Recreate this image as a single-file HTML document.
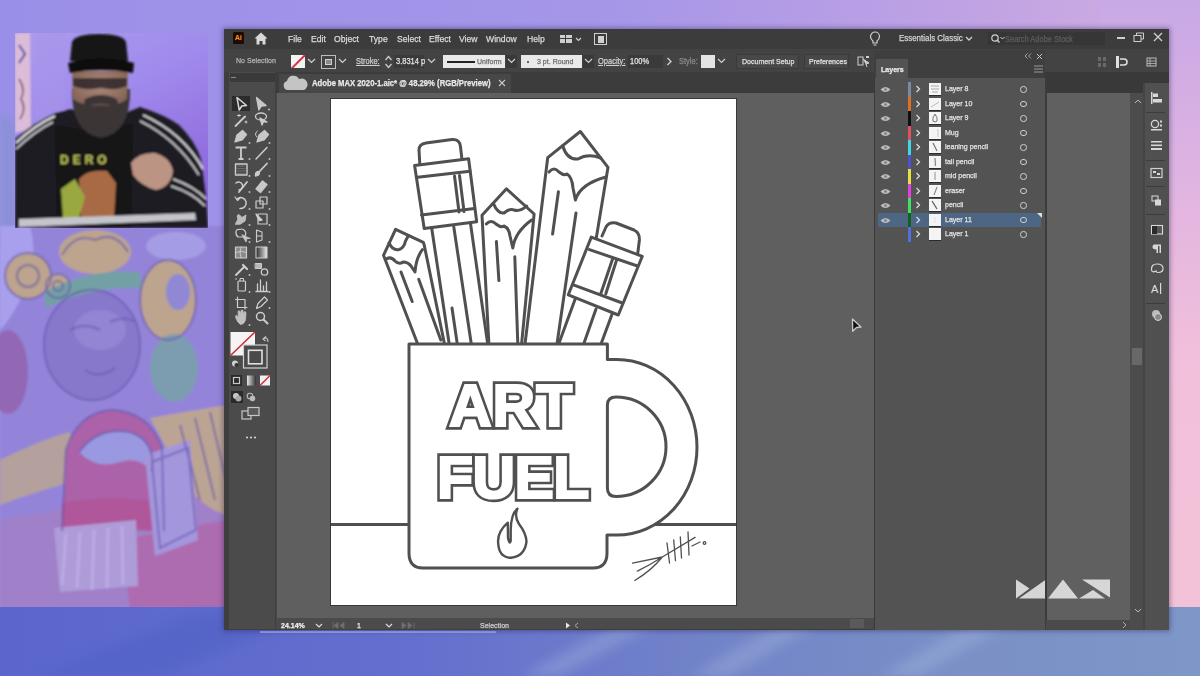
<!DOCTYPE html>
<html><head><meta charset="utf-8">
<style>
*{margin:0;padding:0;box-sizing:border-box}
html,body{width:1200px;height:676px;overflow:hidden;background:#9a8fe8;font-family:"Liberation Sans",sans-serif}
.a{position:absolute}
.t{position:absolute;color:#d8d8d8;font-size:10px;white-space:nowrap;line-height:1;transform:scaleX(.88);transform-origin:0 0;-webkit-text-stroke:.25px currentColor}
</style></head><body>
<!-- background -->
<svg class="a" style="left:0;top:0" width="1200" height="676" viewBox="0 0 1200 676">
<defs>
<linearGradient id="gtop" x1="0" y1="0" x2="1" y2="0">
<stop offset="0" stop-color="#9a8fe8"/><stop offset="0.5" stop-color="#a596e8"/><stop offset="0.8" stop-color="#bfa2e4"/><stop offset="1" stop-color="#d2aee0"/>
</linearGradient>
<linearGradient id="gright" x1="0" y1="0" x2="0" y2="1">
<stop offset="0" stop-color="#c8a8e6"/><stop offset="0.35" stop-color="#e4b6e0"/><stop offset="0.6" stop-color="#f2c0da"/><stop offset="1" stop-color="#f4c2d8"/>
</linearGradient>
<linearGradient id="gbot" x1="0" y1="0" x2="1" y2="0">
<stop offset="0" stop-color="#5a66cc"/><stop offset="0.35" stop-color="#6470ce"/><stop offset="0.6" stop-color="#7284c8"/><stop offset="0.8" stop-color="#7a90c6"/><stop offset="1" stop-color="#7e96c8"/>
</linearGradient>
<filter id="blur6"><feGaussianBlur stdDeviation="6"/></filter>
<filter id="blur3"><feGaussianBlur stdDeviation="3"/></filter>
<filter id="blur1"><feGaussianBlur stdDeviation="1.2"/></filter>
</defs>
<rect width="1200" height="676" fill="url(#gtop)"/>
<rect x="1100" y="0" width="100" height="610" fill="url(#gright)"/>
<path d="M0 110 L15 125 L15 240 L0 250 Z" fill="#8c90d8" filter="url(#blur3)"/>
<!-- left illustration -->
<g filter="url(#blur1)">
<rect x="0" y="226" width="226" height="382" fill="#9384da"/>
<path d="M0 520 L226 480 L226 608 L0 608 Z" fill="#a080c8"/>
<path d="M0 226 H30 Q40 260 20 300 Q10 320 0 330 Z" fill="#a8a0ec"/>
<ellipse cx="8" cy="372" rx="20" ry="42" fill="#9268b4"/>
<!-- face -->
<ellipse cx="92" cy="345" rx="48" ry="55" fill="#8878cc"/>
<ellipse cx="100" cy="330" rx="26" ry="20" fill="#9484d4"/>
<!-- ornaments -->
<circle cx="28" cy="276" r="23" fill="#bca48e"/>
<circle cx="58" cy="286" r="12" fill="#bca48e"/>
<ellipse cx="95" cy="252" rx="36" ry="22" fill="#bca48e"/>
<path d="M44 292 Q90 268 140 272 L142 288 Q92 286 46 308 Z" fill="#72a0a4"/>
<ellipse cx="168" cy="300" rx="28" ry="40" fill="#bca48e"/>
<ellipse cx="178" cy="292" rx="12" ry="18" fill="#9088d4"/>
<ellipse cx="176" cy="246" rx="30" ry="14" fill="#a49ce4"/>
<ellipse cx="174" cy="368" rx="24" ry="34" fill="#7c9cb0"/>
<!-- tan band -->
<path d="M0 460 Q40 440 70 432 L80 480 Q40 490 0 505 Z" fill="#b4a09c"/>
<path d="M150 418 L226 405 L226 515 Q195 505 178 470 Z" fill="#bca494"/>
<!-- pink bottom -->
<path d="M120 540 L226 520 L226 608 L130 608 Z" fill="#ae6cb0"/>
<!-- mask -->
<path d="M62 531 L66 450 Q78 412 112 410 Q150 412 162 448 L164 531 Z" fill="#ac62a8"/>
<path d="M79 452 Q98 426 130 432 Q156 440 152 472 Q140 456 120 462 Q96 470 79 452 Z" fill="#9a98e0"/>
<path d="M62 503 Q112 494 164 503 L164 532 Q112 522 62 532 Z" fill="#b0569a"/>
<!-- fringe -->
<path d="M54 528 L136 520 L138 586 L60 592 Z" fill="#ae9cd8"/>
<path d="M145 455 L190 440 L198 540 L155 556 Z" fill="#a496dc"/>
</g>
<g fill="none" stroke="#c4b4ec" stroke-width="3" opacity="0.6" filter="url(#blur1)">
<path d="M66 534 L62 585 M80 532 L77 588 M94 530 L92 590 M108 528 L107 588 M122 526 L123 584"/>
</g>
<g fill="none" stroke="#6454ac" stroke-width="2" opacity="0.6" filter="url(#blur1)">
<ellipse cx="92" cy="345" rx="48" ry="55"/>
<circle cx="28" cy="276" r="23"/><circle cx="28" cy="276" r="11"/>
<circle cx="58" cy="286" r="12"/><circle cx="58" cy="286" r="5"/>
<path d="M62 255 Q75 232 95 240 Q115 230 128 252"/>
<ellipse cx="168" cy="300" rx="28" ry="40"/>
<path d="M70 330 Q85 322 100 330 M110 322 Q125 315 135 322 M85 370 Q100 380 115 368"/>
<path d="M62 531 L66 450 Q78 412 112 410 Q150 412 162 448 L164 531"/>
<path d="M79 452 Q98 426 130 432 Q156 440 152 472"/>
<path d="M152 462 L188 448 L196 530 L160 548 Z"/>
<path d="M180 425 L200 500 M195 418 L215 500 M210 412 L226 480"/>
</g>
<rect x="0" y="607" width="1200" height="69" fill="url(#gbot)"/>
<g filter="url(#blur6)" opacity="0.55">
<path d="M520 676 L640 612 L680 612 L560 676 Z" fill="#90a2d8"/>
<path d="M690 676 L800 612 L840 612 L730 676 Z" fill="#94a6d6"/>
<path d="M880 676 L990 612 L1030 612 L920 676 Z" fill="#98aad8"/>
<path d="M40 676 L200 612 L320 612 L160 676 Z" fill="#5060c4"/>
</g>
<rect x="260" y="631" width="236" height="2" fill="#9aa4e8"/>
</svg>
<!-- webcam -->
<svg class="a" style="left:15px;top:33px" width="193" height="195" viewBox="0 0 193 195">
<defs>
<linearGradient id="camg" x1="0" y1="0" x2="0.5" y2="1">
<stop offset="0" stop-color="#ac9cee"/><stop offset="0.45" stop-color="#a08aec"/><stop offset="1" stop-color="#8e68dc"/>
</linearGradient>
<radialGradient id="face" cx="0.5" cy="0.4" r="0.6"><stop offset="0" stop-color="#b08c7c"/><stop offset="1" stop-color="#846456"/></radialGradient>
<filter id="cb" x="-5%" y="-5%" width="110%" height="110%"><feGaussianBlur stdDeviation="1.1"/></filter>
</defs>
<rect width="193" height="195" fill="url(#camg)"/>
<g filter="url(#cb)">
<rect x="20" y="0" width="30" height="195" fill="#a894ea" opacity="0.5"/>
<path d="M0 0 H15 L16 96 L0 100 Z" fill="#dcbcd8"/>
<path d="M4 12 L10 21 L4 30" stroke="#3c4ca0" stroke-width="2" fill="none"/>
<path d="M4 46 Q11 56 6 66 Q12 76 5 86" stroke="#6a4a60" stroke-width="1.5" fill="none"/>
<!-- jacket -->
<path d="M0 106 Q18 90 40 80 L56 76 L86 90 L125 74 Q150 82 164 92 Q180 108 186 126 L191 164 L193 195 L0 195 Z" fill="#1c1b20"/>
<path d="M1 110 Q20 92 40 83" stroke="#e6e6ea" stroke-width="2" fill="none"/>
<path d="M1 116 Q20 98 38 89" stroke="#d6d6da" stroke-width="1.6" fill="none"/>
<path d="M128 82 Q168 100 188 136" stroke="#e6e6ea" stroke-width="1.9" fill="none"/>
<path d="M125 88 Q162 106 184 142" stroke="#d6d6da" stroke-width="1.5" fill="none"/>
<path d="M158 146 Q180 154 191 166 M156 153 Q178 160 190 173" stroke="#dedee2" stroke-width="1.7" fill="none"/>
<!-- t-shirt -->
<path d="M40 92 L86 100 L118 90 L116 195 L42 195 Z" fill="#141417"/>
<text x="45" y="131" font-family="Liberation Sans" font-weight="bold" font-size="12" fill="#c6ca5c" letter-spacing="4">DERO</text>
<path d="M64 146 Q72 136 92 138 L101 150 L99 185 L66 185 Z" fill="#a86a44"/>
<path d="M46 156 L60 146 L70 164 L64 185 L48 185 Z" fill="#9aa840"/>
<!-- neck beard -->
<path d="M57 56 Q56 100 86 105 Q116 100 115 56 Z" fill="#3a3436"/>
<!-- face -->
<path d="M57 38 L113 38 L112 66 Q102 74 86 72 Q68 74 58 66 Z" fill="url(#face)"/>
<path d="M58 45 H112 V53 Q102 58 86 55 Q70 58 58 53 Z" fill="#2e2628" opacity="0.85"/>
<path d="M70 66 Q86 58 102 66 L104 74 Q86 68 68 74 Z" fill="#3a3436"/>
<!-- cap -->
<path d="M55 28 L57 9 Q60 1 84 1 Q108 1 111 9 L113 28 Z" fill="#161616"/>
<path d="M53 30 Q86 21 119 30 L118 40 Q86 34 55 40 Z" fill="#0c0c0c"/>
<!-- hand -->
<path d="M116 130 Q124 119 140 120 Q155 124 158 138 Q156 154 141 157 Q126 153 118 142 Z" fill="#bc9484"/>
<!-- desk -->
<path d="M4 186 L180 180 L181 187 L4 194 Z" fill="#c4c4cc"/>
</g>
</svg>
<!-- illustrator window -->
<div class="a" style="left:224px;top:29px;width:945px;height:601px;background:#3e3e3e;box-shadow:0 0 5px 1px rgba(40,30,80,.45)"></div>
<!-- menu bar -->
<div class="a" style="left:224px;top:29px;width:945px;height:20px;background:#3c3c3c"></div>
<div class="a" style="left:233px;top:32px;width:10.5px;height:11.5px;background:#1e0a02;border-radius:1.5px;color:#ff9a1a;font-size:7px;font-weight:bold;line-height:11.5px;text-align:center">Ai</div>
<svg class="a" style="left:254px;top:32px" width="14" height="13" viewBox="0 0 14 13"><path d="M7 0.5 L13.5 6.5 L11.5 6.5 L11.5 12.5 L8.5 12.5 L8.5 9 L5.5 9 L5.5 12.5 L2.5 12.5 L2.5 6.5 L0.5 6.5 Z" fill="#d8d8d8"/></svg>
<div class="t" style="left:288px;top:34px;font-size:9.8px;color:#dcdcdc">File</div>
<div class="t" style="left:311px;top:34px;font-size:9.8px;color:#dcdcdc">Edit</div>
<div class="t" style="left:334px;top:34px;font-size:9.8px;color:#dcdcdc">Object</div>
<div class="t" style="left:369px;top:34px;font-size:9.8px;color:#dcdcdc">Type</div>
<div class="t" style="left:397px;top:34px;font-size:9.8px;color:#dcdcdc">Select</div>
<div class="t" style="left:429px;top:34px;font-size:9.8px;color:#dcdcdc">Effect</div>
<div class="t" style="left:459px;top:34px;font-size:9.8px;color:#dcdcdc">View</div>
<div class="t" style="left:486px;top:34px;font-size:9.8px;color:#dcdcdc">Window</div>
<div class="t" style="left:527px;top:34px;font-size:9.8px;color:#dcdcdc">Help</div>
<svg class="a" style="left:559px;top:33px" width="60" height="12" viewBox="0 0 60 12">
<rect x="1" y="2" width="5" height="3" fill="#cfcfcf"/><rect x="7" y="2" width="6" height="3" fill="#cfcfcf"/><rect x="1" y="6" width="5" height="4" fill="#cfcfcf"/><rect x="7" y="6" width="6" height="4" fill="#cfcfcf"/>
<path d="M17 5 L19.5 7.5 L22 5" stroke="#cfcfcf" stroke-width="1.2" fill="none"/>
<rect x="35.5" y="0.5" width="12" height="11" fill="none" stroke="#cfcfcf"/><rect x="39" y="3" width="6" height="7" fill="#cfcfcf"/>
</svg>
<svg class="a" style="left:869px;top:31px" width="12" height="16" viewBox="0 0 12 16"><path d="M6 1 A4.5 4.5 0 0 1 10.5 5.5 Q10.5 8 8 10 L8 12 L4 12 L4 10 Q1.5 8 1.5 5.5 A4.5 4.5 0 0 1 6 1 Z" fill="none" stroke="#d0d0d0" stroke-width="1.2"/><path d="M4.5 14 L7.5 14" stroke="#d0d0d0"/></svg>
<div class="t" style="left:899px;top:34px;font-size:9px;color:#d4d4d4">Essentials Classic</div>
<svg class="a" style="left:965px;top:36px" width="8" height="6"><path d="M1 1 L4 4 L7 1" stroke="#d0d0d0" stroke-width="1.3" fill="none"/></svg>
<div class="a" style="left:988px;top:32px;width:117px;height:13px;background:#363636"></div>
<svg class="a" style="left:990px;top:33px" width="16" height="11"><circle cx="5" cy="5" r="3.2" stroke="#d0d0d0" stroke-width="1.2" fill="none"/><path d="M7.3 7.3 L9.5 9.5" stroke="#d0d0d0" stroke-width="1.3"/><path d="M10.5 4 L12.5 6 L14.5 4" stroke="#d0d0d0" fill="none"/></svg>
<div class="t" style="left:1005px;top:35px;font-size:8.5px;color:#5e5e5e">Search Adobe Stock</div>
<div class="a" style="left:1117px;top:37px;width:8px;height:2px;background:#cfcfcf"></div>
<svg class="a" style="left:1133px;top:32px" width="12" height="11"><rect x="1" y="3.5" width="7" height="6" fill="none" stroke="#cfcfcf"/><path d="M3.5 3.5 L3.5 1 L10.5 1 L10.5 7 L8 7" fill="none" stroke="#cfcfcf"/></svg>
<svg class="a" style="left:1153px;top:32px" width="10" height="10"><path d="M1 1 L9 9 M9 1 L1 9" stroke="#cfcfcf" stroke-width="1.3"/></svg>

<!-- control bar -->
<div class="a" style="left:224px;top:49px;width:945px;height:23px;background:#434343"></div>
<div class="t" style="left:236px;top:57px;font-size:8px;color:#b4b4b4">No Selection</div>
<div class="a" style="left:291px;top:55px;width:14px;height:13px;background:#f4f4f4;overflow:hidden"><div style="position:absolute;left:-3px;top:5.5px;width:20px;height:1.5px;background:#d83040;transform:rotate(-45deg)"></div></div>
<svg class="a" style="left:307px;top:58px" width="9" height="6"><path d="M1 1 L4.5 4.5 L8 1" stroke="#cfcfcf" stroke-width="1.2" fill="none"/></svg>
<div class="a" style="left:321px;top:55px;width:15px;height:14px;border:1.5px solid #bdbdbd"></div>
<div class="a" style="left:325px;top:59px;width:7px;height:6px;background:#8a8a8a;border:1px solid #cfcfcf"></div>
<svg class="a" style="left:338px;top:58px" width="9" height="6"><path d="M1 1 L4.5 4.5 L8 1" stroke="#cfcfcf" stroke-width="1.2" fill="none"/></svg>
<div class="t" style="left:356px;top:57px;font-size:8.5px;color:#d0d0d0;text-decoration:underline">Stroke:</div>
<svg class="a" style="left:384px;top:54px" width="9" height="16"><path d="M1.5 6 L4.5 2.5 L7.5 6 M1.5 10 L4.5 13.5 L7.5 10" stroke="#d0d0d0" stroke-width="1.2" fill="none"/></svg>
<div class="a" style="left:394px;top:55px;width:30px;height:13px;background:#3a3a3a"></div>
<div class="t" style="left:396px;top:57px;font-size:8.5px;color:#e4e4e4">3.8314 p</div>
<svg class="a" style="left:427px;top:58px" width="9" height="6"><path d="M1 1 L4.5 4.5 L8 1" stroke="#cfcfcf" stroke-width="1.2" fill="none"/></svg>
<div class="a" style="left:443px;top:55px;width:62px;height:13px;background:#e9e9e9"></div>
<div class="a" style="left:447px;top:61px;width:28px;height:1.6px;background:#222"></div>
<div class="t" style="left:477px;top:58px;font-size:8px;color:#6a6a6a">Uniform</div>
<div class="a" style="left:506px;top:55px;width:11px;height:13px;background:#393939"></div>
<svg class="a" style="left:507px;top:58px" width="9" height="6"><path d="M1 1 L4.5 4.5 L8 1" stroke="#cfcfcf" stroke-width="1.2" fill="none"/></svg>
<div class="a" style="left:521px;top:55px;width:61px;height:13px;background:#e9e9e9"></div>
<div class="a" style="left:527px;top:60.5px;width:2px;height:2px;background:#333;border-radius:1px"></div>
<div class="t" style="left:537px;top:58px;font-size:8px;color:#6a6a6a">3 pt. Round</div>
<div class="a" style="left:583px;top:55px;width:11px;height:13px;background:#393939"></div>
<svg class="a" style="left:584px;top:58px" width="9" height="6"><path d="M1 1 L4.5 4.5 L8 1" stroke="#cfcfcf" stroke-width="1.2" fill="none"/></svg>
<div class="t" style="left:598px;top:57px;font-size:8.5px;color:#cfcfcf;text-decoration:underline">Opacity:</div>
<div class="a" style="left:628px;top:55px;width:35px;height:13px;background:#3a3a3a"></div>
<div class="t" style="left:630px;top:57px;font-size:8.5px;color:#e4e4e4">100%</div>
<svg class="a" style="left:666px;top:57px" width="7" height="9"><path d="M1.5 1 L5 4.5 L1.5 8" stroke="#d0d0d0" stroke-width="1.3" fill="none"/></svg>
<div class="t" style="left:679px;top:57px;font-size:8.5px;color:#8c8c8c">Style:</div>
<div class="a" style="left:701px;top:55px;width:14px;height:13px;background:#e4e4e4"></div>
<svg class="a" style="left:717px;top:58px" width="9" height="6"><path d="M1 1 L4.5 4.5 L8 1" stroke="#cfcfcf" stroke-width="1.2" fill="none"/></svg>
<div class="a" style="left:736px;top:54px;width:63px;height:15px;background:#484848;border:1px solid #3a3a3a"></div>
<div class="t" style="left:742px;top:58px;font-size:8px;color:#e2e2e2">Document Setup</div>
<div class="a" style="left:804px;top:54px;width:45px;height:15px;background:#484848;border:1px solid #3a3a3a"></div>
<div class="t" style="left:809px;top:58px;font-size:8px;color:#e2e2e2">Preferences</div>
<svg class="a" style="left:857px;top:55px" width="14" height="13"><rect x="1" y="2" width="5" height="8" fill="none" stroke="#cfcfcf"/><path d="M6 4 L12 8 L9 9 L10 12" stroke="#cfcfcf" fill="#cfcfcf"/><rect x="9" y="1" width="3" height="2" fill="#cfcfcf"/></svg>
<!-- right side control icons -->
<svg class="a" style="left:1098px;top:55px" width="60" height="14">
<rect x="0" y="2" width="3" height="4" fill="#6a6a6a"/><rect x="5" y="2" width="3" height="4" fill="#6a6a6a"/><rect x="0" y="8" width="3" height="4" fill="#6a6a6a"/><rect x="5" y="8" width="3" height="4" fill="#6a6a6a"/>
<rect x="18" y="1" width="3" height="12" fill="#e0e0e0"/><path d="M22 4 L26 4 A3 3 0 0 1 26 10 L22 10" stroke="#e0e0e0" stroke-width="1.5" fill="none"/>
<rect x="49" y="3" width="9" height="8" fill="none" stroke="#bdbdbd"/><path d="M49 6 L58 6 M49 8.5 L58 8.5 M52 3 L52 11" stroke="#bdbdbd" stroke-width=".8"/>
</svg>

<!-- tab bar strip -->
<div class="a" style="left:276px;top:72px;width:599px;height:21px;background:#3c3c3c"></div>
<div class="a" style="left:279px;top:74px;width:232px;height:19px;background:#474747"></div>
<svg class="a" style="left:283px;top:74px" width="25" height="17" viewBox="0 0 25 17"><path d="M5 16 A4.6 4.6 0 0 1 4 7 A6.5 6.5 0 0 1 16 5 A5.5 5.5 0 0 1 21 16 Z" fill="#c4c4c4"/></svg>
<div class="t" style="left:312px;top:79px;font-size:8.5px;font-weight:bold;color:#e8e8e8;transform:scaleX(.905)">Adobe MAX 2020-1.aic* @ 48.29% (RGB/Preview)</div>
<svg class="a" style="left:498px;top:79px" width="8" height="8"><path d="M1 1 L7 7 M7 1 L1 7" stroke="#c8c8c8" stroke-width="1.1"/></svg>

<!-- toolbar -->
<div class="a" style="left:229px;top:72px;width:47px;height:557px;background:#4b4b4b"></div>
<div class="a" style="left:230px;top:73px;width:46px;height:9px;background:#3a3a3a"></div>
<div class="a" style="left:231px;top:76.5px;width:5px;height:1.5px;background:#8a8a8a"></div>
<div class="a" style="left:275px;top:72px;width:1px;height:557px;background:#3e3e3e"></div>
<div class="a" style="left:232px;top:96px;width:18px;height:15px;background:#2c2c2c"></div>

<!-- canvas -->
<div class="a" style="left:276px;top:93px;width:598px;height:525px;background:#5f5f5f"></div>
<div class="a" style="left:276px;top:93px;width:1px;height:525px;background:#4a4a4a"></div>
<!-- h scrollbar / status -->
<div class="a" style="left:276px;top:618px;width:598px;height:11px;background:#4b4b4b"></div>
<div class="t" style="left:281px;top:622px;font-size:8px;font-weight:bold;color:#f0f0f0">24.14%</div>
<svg class="a" style="left:315px;top:623px" width="8" height="6"><path d="M1 1 L4 4 L7 1" stroke="#dcdcdc" stroke-width="1.2" fill="none"/></svg>
<svg class="a" style="left:332px;top:622px" width="14" height="7"><path d="M1 0.5 V6.5 M6 0.5 L2 3.5 L6 6.5 Z M12 0.5 L8 3.5 L12 6.5 Z" stroke="#6e6e6e" fill="#6e6e6e" stroke-width=".8"/></svg>
<div class="t" style="left:357px;top:622px;font-size:8px;color:#f0f0f0">1</div>
<svg class="a" style="left:385px;top:623px" width="8" height="6"><path d="M1 1 L4 4 L7 1" stroke="#dcdcdc" stroke-width="1.2" fill="none"/></svg>
<svg class="a" style="left:401px;top:622px" width="14" height="7"><path d="M1 0.5 L5 3.5 L1 6.5 Z M7 0.5 L11 3.5 L7 6.5 Z M13 0.5 V6.5" stroke="#6e6e6e" fill="#6e6e6e" stroke-width=".8"/></svg>
<div class="t" style="left:480px;top:622px;font-size:8px;color:#cfcfcf">Selection</div>
<svg class="a" style="left:565px;top:622px" width="16" height="7"><path d="M1 0.5 L5 3.5 L1 6.5 Z" fill="#e8e8e8"/><path d="M13 1 L10 3.5 L13 6" stroke="#aaa" fill="none"/></svg>
<div class="a" style="left:850px;top:619px;width:14px;height:9px;background:#5a5a5a"></div>

<!-- layers panel -->
<div class="a" style="left:874px;top:51px;width:171px;height:579px;background:#535353;border-left:1px solid #3a3a3a"></div>
<div class="a" style="left:874px;top:50px;width:171px;height:28px;background:#3f3f3f"></div>
<div class="a" style="left:876px;top:59px;width:32px;height:19px;background:#535353"></div>
<div class="t" style="left:881px;top:65.5px;font-size:8px;font-weight:bold;color:#ececec">Layers</div>
<svg class="a" style="left:1024px;top:53px" width="8" height="6"><path d="M3.5 0.5 L1 3 L3.5 5.5 M7 0.5 L4.5 3 L7 5.5" stroke="#aaa" fill="none" stroke-width=".9"/></svg>
<svg class="a" style="left:1036px;top:53px" width="7" height="7"><path d="M1 1 L6 6 M6 1 L1 6" stroke="#c8c8c8" stroke-width="1"/></svg>
<svg class="a" style="left:1034px;top:65px" width="9" height="8"><path d="M0 1 H9 M0 4 H9 M0 7 H9" stroke="#9a9a9a" stroke-width="1.2"/></svg>
<div class="a" style="left:878px;top:213px;width:163px;height:14px;background:#4d6684"></div>
<div class="a" style="left:1037px;top:213px;width:0;height:0;border-top:5px solid #e0e0e0;border-left:5px solid transparent"></div>
<svg class="a" style="left:880px;top:86.0px" width="11" height="7"><path d="M0.5 3.5 Q5.5 -1.5 10.5 3.5 Q5.5 8.5 0.5 3.5 Z" fill="#bdbdbd"/><circle cx="5.5" cy="3.5" r="1.3" fill="#7a7a7a"/></svg><div class="a" style="left:908px;top:82.0px;width:3.2px;height:14.5px;background:#7a8aa0"></div><svg class="a" style="left:915px;top:85.0px" width="6" height="8"><path d="M1.5 1 L4.5 4 L1.5 7" stroke="#d8d8d8" stroke-width="1.3" fill="none"/></svg><div class="a" style="left:929px;top:83.0px;width:12px;height:12px;background:#f4f4f4;box-shadow:0 1px 0 #2a2a2a"></div><svg class="a" style="left:929px;top:83.0px" width="12" height="12"><path d="M2 3 H10 M2 6 H10 M3 9 H9" stroke="#999" stroke-width=".8"/></svg><div class="t" style="left:944.5px;top:85.3px;font-size:8px;color:#e6e6e6">Layer 8</div><div class="a" style="left:1020px;top:86.0px;width:6.5px;height:6.5px;border:1.4px solid #cfcfcf;border-radius:50%"></div>
<svg class="a" style="left:880px;top:100.5px" width="11" height="7"><path d="M0.5 3.5 Q5.5 -1.5 10.5 3.5 Q5.5 8.5 0.5 3.5 Z" fill="#bdbdbd"/><circle cx="5.5" cy="3.5" r="1.3" fill="#7a7a7a"/></svg><div class="a" style="left:908px;top:96.5px;width:3.2px;height:14.5px;background:#e07020"></div><svg class="a" style="left:915px;top:99.5px" width="6" height="8"><path d="M1.5 1 L4.5 4 L1.5 7" stroke="#d8d8d8" stroke-width="1.3" fill="none"/></svg><div class="a" style="left:929px;top:97.5px;width:12px;height:12px;background:#f4f4f4;box-shadow:0 1px 0 #2a2a2a"></div><svg class="a" style="left:929px;top:97.5px" width="12" height="12"><path d="M2 9 L10 4" stroke="#aaa" stroke-width=".8"/></svg><div class="t" style="left:944.5px;top:99.8px;font-size:8px;color:#e6e6e6">Layer 10</div><div class="a" style="left:1020px;top:100.5px;width:6.5px;height:6.5px;border:1.4px solid #cfcfcf;border-radius:50%"></div>
<svg class="a" style="left:880px;top:115.0px" width="11" height="7"><path d="M0.5 3.5 Q5.5 -1.5 10.5 3.5 Q5.5 8.5 0.5 3.5 Z" fill="#bdbdbd"/><circle cx="5.5" cy="3.5" r="1.3" fill="#7a7a7a"/></svg><div class="a" style="left:908px;top:111.0px;width:3.2px;height:14.5px;background:#101010"></div><svg class="a" style="left:915px;top:114.0px" width="6" height="8"><path d="M1.5 1 L4.5 4 L1.5 7" stroke="#d8d8d8" stroke-width="1.3" fill="none"/></svg><div class="a" style="left:929px;top:112.0px;width:12px;height:12px;background:#f4f4f4;box-shadow:0 1px 0 #2a2a2a"></div><svg class="a" style="left:929px;top:112.0px" width="12" height="12"><path d="M6 2 Q3 6 4 9 Q6 11 8 9 Q9 6 6 2" stroke="#666" stroke-width=".9" fill="none"/></svg><div class="t" style="left:944.5px;top:114.3px;font-size:8px;color:#e6e6e6">Layer 9</div><div class="a" style="left:1020px;top:115.0px;width:6.5px;height:6.5px;border:1.4px solid #cfcfcf;border-radius:50%"></div>
<svg class="a" style="left:880px;top:129.5px" width="11" height="7"><path d="M0.5 3.5 Q5.5 -1.5 10.5 3.5 Q5.5 8.5 0.5 3.5 Z" fill="#bdbdbd"/><circle cx="5.5" cy="3.5" r="1.3" fill="#7a7a7a"/></svg><div class="a" style="left:908px;top:125.5px;width:3.2px;height:14.5px;background:#e05060"></div><svg class="a" style="left:915px;top:128.5px" width="6" height="8"><path d="M1.5 1 L4.5 4 L1.5 7" stroke="#d8d8d8" stroke-width="1.3" fill="none"/></svg><div class="a" style="left:929px;top:126.5px;width:12px;height:12px;background:#f4f4f4;box-shadow:0 1px 0 #2a2a2a"></div><svg class="a" style="left:929px;top:126.5px" width="12" height="12"><path d="M9 2 V10" stroke="#bbb" stroke-width=".8"/></svg><div class="t" style="left:944.5px;top:128.8px;font-size:8px;color:#e6e6e6">Mug</div><div class="a" style="left:1020px;top:129.5px;width:6.5px;height:6.5px;border:1.4px solid #cfcfcf;border-radius:50%"></div>
<svg class="a" style="left:880px;top:144.0px" width="11" height="7"><path d="M0.5 3.5 Q5.5 -1.5 10.5 3.5 Q5.5 8.5 0.5 3.5 Z" fill="#bdbdbd"/><circle cx="5.5" cy="3.5" r="1.3" fill="#7a7a7a"/></svg><div class="a" style="left:908px;top:140.0px;width:3.2px;height:14.5px;background:#40d8e8"></div><svg class="a" style="left:915px;top:143.0px" width="6" height="8"><path d="M1.5 1 L4.5 4 L1.5 7" stroke="#d8d8d8" stroke-width="1.3" fill="none"/></svg><div class="a" style="left:929px;top:141.0px;width:12px;height:12px;background:#f4f4f4;box-shadow:0 1px 0 #2a2a2a"></div><svg class="a" style="left:929px;top:141.0px" width="12" height="12"><path d="M4 2 L8 10" stroke="#777" stroke-width="1.2"/></svg><div class="t" style="left:944.5px;top:143.3px;font-size:8px;color:#e6e6e6">leaning pencil</div><div class="a" style="left:1020px;top:144.0px;width:6.5px;height:6.5px;border:1.4px solid #cfcfcf;border-radius:50%"></div>
<svg class="a" style="left:880px;top:158.5px" width="11" height="7"><path d="M0.5 3.5 Q5.5 -1.5 10.5 3.5 Q5.5 8.5 0.5 3.5 Z" fill="#bdbdbd"/><circle cx="5.5" cy="3.5" r="1.3" fill="#7a7a7a"/></svg><div class="a" style="left:908px;top:154.5px;width:3.2px;height:14.5px;background:#5050d0"></div><svg class="a" style="left:915px;top:157.5px" width="6" height="8"><path d="M1.5 1 L4.5 4 L1.5 7" stroke="#d8d8d8" stroke-width="1.3" fill="none"/></svg><div class="a" style="left:929px;top:155.5px;width:12px;height:12px;background:#f4f4f4;box-shadow:0 1px 0 #2a2a2a"></div><svg class="a" style="left:929px;top:155.5px" width="12" height="12"><path d="M6 2 L6.5 10" stroke="#888" stroke-width="1.2"/></svg><div class="t" style="left:944.5px;top:157.8px;font-size:8px;color:#e6e6e6">tall pencil</div><div class="a" style="left:1020px;top:158.5px;width:6.5px;height:6.5px;border:1.4px solid #cfcfcf;border-radius:50%"></div>
<svg class="a" style="left:880px;top:173.0px" width="11" height="7"><path d="M0.5 3.5 Q5.5 -1.5 10.5 3.5 Q5.5 8.5 0.5 3.5 Z" fill="#bdbdbd"/><circle cx="5.5" cy="3.5" r="1.3" fill="#7a7a7a"/></svg><div class="a" style="left:908px;top:169.0px;width:3.2px;height:14.5px;background:#e8e040"></div><svg class="a" style="left:915px;top:172.0px" width="6" height="8"><path d="M1.5 1 L4.5 4 L1.5 7" stroke="#d8d8d8" stroke-width="1.3" fill="none"/></svg><div class="a" style="left:929px;top:170.0px;width:12px;height:12px;background:#f4f4f4;box-shadow:0 1px 0 #2a2a2a"></div><svg class="a" style="left:929px;top:170.0px" width="12" height="12"><path d="M6 2 L6 10" stroke="#999" stroke-width="1.1"/></svg><div class="t" style="left:944.5px;top:172.3px;font-size:8px;color:#e6e6e6">mid pencil</div><div class="a" style="left:1020px;top:173.0px;width:6.5px;height:6.5px;border:1.4px solid #cfcfcf;border-radius:50%"></div>
<svg class="a" style="left:880px;top:187.5px" width="11" height="7"><path d="M0.5 3.5 Q5.5 -1.5 10.5 3.5 Q5.5 8.5 0.5 3.5 Z" fill="#bdbdbd"/><circle cx="5.5" cy="3.5" r="1.3" fill="#7a7a7a"/></svg><div class="a" style="left:908px;top:183.5px;width:3.2px;height:14.5px;background:#e040e0"></div><svg class="a" style="left:915px;top:186.5px" width="6" height="8"><path d="M1.5 1 L4.5 4 L1.5 7" stroke="#d8d8d8" stroke-width="1.3" fill="none"/></svg><div class="a" style="left:929px;top:184.5px;width:12px;height:12px;background:#f4f4f4;box-shadow:0 1px 0 #2a2a2a"></div><svg class="a" style="left:929px;top:184.5px" width="12" height="12"><path d="M8 2 L5 10" stroke="#888" stroke-width="1.2"/></svg><div class="t" style="left:944.5px;top:186.8px;font-size:8px;color:#e6e6e6">eraser</div><div class="a" style="left:1020px;top:187.5px;width:6.5px;height:6.5px;border:1.4px solid #cfcfcf;border-radius:50%"></div>
<svg class="a" style="left:880px;top:202.0px" width="11" height="7"><path d="M0.5 3.5 Q5.5 -1.5 10.5 3.5 Q5.5 8.5 0.5 3.5 Z" fill="#bdbdbd"/><circle cx="5.5" cy="3.5" r="1.3" fill="#7a7a7a"/></svg><div class="a" style="left:908px;top:198.0px;width:3.2px;height:14.5px;background:#40e060"></div><svg class="a" style="left:915px;top:201.0px" width="6" height="8"><path d="M1.5 1 L4.5 4 L1.5 7" stroke="#d8d8d8" stroke-width="1.3" fill="none"/></svg><div class="a" style="left:929px;top:199.0px;width:12px;height:12px;background:#f4f4f4;box-shadow:0 1px 0 #2a2a2a"></div><svg class="a" style="left:929px;top:199.0px" width="12" height="12"><path d="M3 2 L8 10" stroke="#666" stroke-width="1.4"/></svg><div class="t" style="left:944.5px;top:201.3px;font-size:8px;color:#e6e6e6">pencil</div><div class="a" style="left:1020px;top:202.0px;width:6.5px;height:6.5px;border:1.4px solid #cfcfcf;border-radius:50%"></div>
<svg class="a" style="left:880px;top:216.5px" width="11" height="7"><path d="M0.5 3.5 Q5.5 -1.5 10.5 3.5 Q5.5 8.5 0.5 3.5 Z" fill="#bdbdbd"/><circle cx="5.5" cy="3.5" r="1.3" fill="#7a7a7a"/></svg><div class="a" style="left:908px;top:212.5px;width:3.2px;height:14.5px;background:#106020"></div><svg class="a" style="left:915px;top:215.5px" width="6" height="8"><path d="M1.5 1 L4.5 4 L1.5 7" stroke="#d8d8d8" stroke-width="1.3" fill="none"/></svg><div class="a" style="left:929px;top:213.5px;width:12px;height:12px;background:#f4f4f4;box-shadow:0 1px 0 #2a2a2a"></div><svg class="a" style="left:929px;top:213.5px" width="12" height="12"><path d="M6 3 V9" stroke="#ddd" stroke-width=".8"/></svg><div class="t" style="left:944.5px;top:215.8px;font-size:8px;color:#e6e6e6">Layer 11</div><div class="a" style="left:1020px;top:216.5px;width:6.5px;height:6.5px;border:1.4px solid #cfcfcf;border-radius:50%"></div>
<div class="a" style="left:908px;top:227.0px;width:3.2px;height:14.5px;background:#5070e0"></div><svg class="a" style="left:915px;top:230.0px" width="6" height="8"><path d="M1.5 1 L4.5 4 L1.5 7" stroke="#d8d8d8" stroke-width="1.3" fill="none"/></svg><div class="a" style="left:929px;top:228.0px;width:12px;height:12px;background:#f4f4f4;box-shadow:0 1px 0 #2a2a2a"></div><svg class="a" style="left:929px;top:228.0px" width="12" height="12"></svg><div class="t" style="left:944.5px;top:230.3px;font-size:8px;color:#e6e6e6">Layer 1</div><div class="a" style="left:1020px;top:231.0px;width:6.5px;height:6.5px;border:1.4px solid #cfcfcf;border-radius:50%"></div>


<!-- right area -->
<div class="a" style="left:1045px;top:72px;width:124px;height:21px;background:#393939"></div>
<div class="a" style="left:1046px;top:93px;width:84px;height:537px;background:#606060"></div>
<div class="a" style="left:1130px;top:93px;width:13px;height:537px;background:#4c4c4c"></div>
<svg class="a" style="left:1134px;top:98px" width="8" height="6"><path d="M1 5 L4 2 L7 5" stroke="#bbb" fill="none"/></svg>
<div class="a" style="left:1132px;top:348px;width:10px;height:17px;background:#686868"></div>
<svg class="a" style="left:1134px;top:608px" width="8" height="6"><path d="M1 1 L4 4 L7 1" stroke="#bbb" fill="none"/></svg>
<div class="a" style="left:1143px;top:83px;width:26px;height:547px;background:#505050"></div><div class="a" style="left:1143px;top:83px;width:2px;height:547px;background:#454545"></div>
<svg class="a" style="left:1144px;top:83px" width="25" height="250" viewBox="1144 83 25 250">
<g fill="#d8d8d8" stroke="none">
<rect x="1151" y="92" width="1.5" height="12"/><rect x="1153" y="93.5" width="5" height="3.5"/><rect x="1153" y="99" width="9" height="3.5"/>
<circle cx="1155" cy="124" r="3.6" fill="none" stroke="#d8d8d8" stroke-width="1.3"/><rect x="1160" y="120.5" width="2" height="2"/><rect x="1160" y="124.5" width="2" height="2"/><rect x="1151" y="129" width="11" height="1.5"/>
<rect x="1151" y="141" width="11" height="1.5"/><rect x="1151" y="144.5" width="11" height="1.6"/><rect x="1151" y="148" width="11" height="2"/>
<rect x="1151" y="168.5" width="11" height="9" fill="none" stroke="#d0d0d0" stroke-width="1.2"/><rect x="1153" y="171" width="3" height="2"/><rect x="1157" y="173" width="3" height="2"/>
<rect x="1152" y="196" width="6" height="5" fill="none" stroke="#d0d0d0" stroke-width="1.1"/><rect x="1155" y="199.5" width="6" height="6"/>
<rect x="1151.5" y="225.5" width="11" height="8.5" fill="#555" stroke="#d8d8d8" stroke-width="1.1"/><rect x="1152" y="226" width="5" height="8" fill="#2a2a2a"/>
<path d="M1154 244.5 H1161 V253 H1159.5 V246 H1158 V253 H1156.5 V249.5 Q1152.5 249.5 1152.5 247 Q1152.5 244.5 1154 244.5 Z"/>
<path d="M1151.5 270 Q1151 264 1157 264 Q1163 264 1163 268.5 Q1163 272.5 1158 272.5 Q1156 272.5 1156 271 Q1152 273 1151.5 270 Z" fill="none" stroke="#d8d8d8" stroke-width="1.2"/>
<text x="1151" y="293" font-family="Liberation Sans" font-size="11" fill="#e0e0e0">A</text><rect x="1160" y="283" width="1.2" height="11"/>
<circle cx="1156" cy="314" r="4" fill="#bbb"/><circle cx="1158" cy="317" r="3.5" fill="#888" stroke="#d8d8d8" stroke-width="1"/>
</g>
<g fill="#3c3c3c"><rect x="1146" y="112" width="19" height="1"/><rect x="1146" y="160" width="19" height="1"/><rect x="1146" y="186" width="19" height="1"/><rect x="1146" y="214" width="19" height="1"/><rect x="1146" y="303" width="19" height="1"/></g>
</svg>
<!-- cursor -->
<svg class="a" style="left:849px;top:316px" width="16" height="18" viewBox="849 316 16 18"><path d="M852.5 319 L861 327 L856.5 327.5 L852.7 331.3 Z" fill="#111" stroke="#c8c8c8" stroke-width="1.3" stroke-linejoin="round"/></svg>
<!-- MAX logo -->
<svg class="a" style="left:1014px;top:577px" width="100" height="25" viewBox="1014 577 100 25">
<g fill="#d6d6d6">
<path d="M1016 579.5 L1029.5 588.5 L1016 598.5 Z"/>
<path d="M1019 598.5 L1046 579.5 L1046 598.5 Z"/>
<path d="M1048 598.5 L1063 579.5 L1078 598.5 Z"/>
<path d="M1082 579.5 L1110 579.5 L1110 597.5 Z"/>
<path d="M1079 598.5 L1093 590 L1105 598.5 Z"/>
</g>
</svg>
<div class="a" style="left:1045px;top:78px;width:1.5px;height:552px;background:#3c3c3c"></div>
<div class="a" style="left:1046px;top:620px;width:84px;height:10px;background:#4a4a4a"></div>
<svg class="a" style="left:1121px;top:621px" width="8" height="8"><path d="M2 1 L5 4 L2 7" stroke="#aaa" fill="none"/></svg>
<!-- toolbar icons -->
<svg class="a" style="left:229px;top:90px" width="47" height="355" viewBox="229 90 47 355">
<g fill="none" stroke="#cdcdcd" stroke-width="1.3" stroke-linejoin="round" stroke-linecap="round">
<!-- r1 selection -->
<path d="M237 97.5 L246.5 105.5 L241.8 106 L239.2 110 Z" stroke="#d8d8d8" stroke-width="1.5"/>
<path d="M256.5 97.5 L266 105.5 L261.5 106 L258.8 110 Z" fill="#c8c8c8" stroke="#c8c8c8"/>
<!-- r2 magic wand, lasso -->
<path d="M235.5 126 L245 116.5" stroke-width="1.8"/>
<path d="M239 114.5 L239 116.5 M237.5 115.5 L240.5 115.5 M246 121 L246 123 M245 122 L247 122" stroke-width="1"/>
<ellipse cx="261" cy="116.5" rx="5.5" ry="3.5"/>
<path d="M260 118 L262 125 L263.5 121.5 L267 122 Z" fill="#c8c8c8"/>
<!-- r3 pen, curvature pen -->
<path d="M235 142 L237 135 L242.5 130.5 L246.5 134.5 L242 140 Z" fill="#c8c8c8" stroke="#c8c8c8"/>
<path d="M257 142 L259 135 L264.5 130.5 L268.5 134.5 L264 140 Z" fill="#c8c8c8" stroke="#c8c8c8"/>
<path d="M257.5 131 Q253.5 134 257 137" stroke-width="1"/>
<!-- r4 type, line -->
<path d="M235.5 147.5 H246.5 M241 147.5 V159 M238.5 159 H243.5" stroke-width="1.8" stroke-linecap="butt"/>
<path d="M256 159 L267 147.5" stroke-width="1.5"/>
<!-- r5 rect, brush -->
<rect x="235.5" y="164" width="11.5" height="11" stroke-width="1.4"/>
<path d="M237.5 166 H245 M237.5 168.5 H245 M237.5 171 H245 M237.5 173.5 H245" stroke-width=".5" stroke="#909090"/>
<path d="M258.5 172.5 L267 163.5" stroke-width="1.8"/>
<path d="M255.5 176 Q255 172 258.5 171.5 L259.5 173 Q259 176 255.5 176 Z" fill="#c8c8c8"/>
<!-- r6 shaper, eraser -->
<path d="M236 183 A4 4 0 1 1 239 190" stroke-width="1.5"/>
<path d="M239 192 L247 182" stroke-width="1.8"/>
<path d="M256 189 L262.5 181 L267 184.5 L260.5 192.5 Z" fill="#c8c8c8" stroke="#c8c8c8"/>
<!-- r7 rotate, scale -->
<path d="M237 199 A5.5 5.5 0 1 1 240 208.5" stroke-width="1.5"/>
<path d="M235 197 L237.5 200.5 L240.5 197.5" stroke-width="1.2"/>
<rect x="256" y="201" width="7" height="7" stroke-width="1.2"/>
<rect x="260" y="197" width="7" height="7" stroke-width="1.2"/>
<!-- r8 warp, free transform -->
<path d="M235.5 224 L238 219 Q236 215 239 214.5 L242 217.5 L246 215 L245 221 L240.5 224 Z" fill="#bdbdbd" stroke="#bdbdbd" stroke-width="1"/>
<rect x="258" y="214" width="9" height="10" stroke-width="1.2"/>
<path d="M256 214 L262 220 L259 220.5 Z" fill="#c8c8c8"/>
<!-- r9 shape builder, perspective -->
<path d="M236 232 Q236 229 239.5 229.5 Q242.5 228 245 231 Q247 234 244 237 L238 237 Q235.5 235 236 232 Z" stroke-width="1.2"/>
<path d="M242 235 L246 242 L247 238.5 L250 238.5 Z" fill="#c8c8c8" stroke="#c8c8c8" stroke-width=".8"/>
<path d="M256.5 230 L256.5 242 M256.5 230 L262 232 L262 240 L256.5 242 M262 236 L256.5 236" stroke-width="1.1"/>
<!-- r10 mesh, gradient -->
<rect x="235.5" y="247" width="11" height="11" fill="#8a8a8a" stroke-width="1.2"/>
<path d="M235.5 252.5 Q241 250 246.5 252.5 M241 247 Q239 252.5 241 258" stroke-width=".9"/>
<defs><linearGradient id="tg" x1="0" x2="1"><stop offset="0" stop-color="#2a2a2a"/><stop offset="1" stop-color="#e8e8e8"/></linearGradient></defs>
<rect x="256" y="247" width="11" height="11" fill="url(#tg)" stroke-width="1.1"/>
<!-- r11 eyedropper, blend -->
<path d="M236 275 L244 267" stroke-width="2"/>
<path d="M243 265 L247 269" stroke-width="2.2"/>
<rect x="255.5" y="263.5" width="6" height="5" fill="#b8b8b8" stroke-width="1"/>
<circle cx="264.5" cy="272" r="3.2" stroke-width="1.3"/>
<!-- r12 symbol sprayer, graph -->
<rect x="238" y="281" width="7.5" height="10" rx="1" stroke-width="1.2"/>
<path d="M240 281 V278.5 H243.5 V281 M235.5 279 L236.5 279" stroke-width="1"/>
<path d="M256 291.5 H268 M257.5 291 V284 M260.5 291 V280 M263.5 291 V286 M266.5 291 V282" stroke-width="1.3"/>
<!-- r13 artboard, slice -->
<path d="M237.5 297 V307.5 H247 M235.5 299.5 H245 V309" stroke-width="1.2"/>
<path d="M256.5 308.5 L258 303.5 L264.5 297 L267.5 300 L261 306.5 Z" stroke-width="1.2"/>
<!-- r14 hand, zoom -->
<path d="M236 318 Q235 314.5 237 315.5 L238.5 318 L238 311.5 Q239 310 240 311.5 L240.5 316 L241 310.5 Q242 309.5 243 310.5 L243.2 316 L244 312 Q245 311 246 312.5 L245.5 320 Q244 324.5 240.5 324.5 Q237.5 323 236 318 Z" fill="#c0c0c0" stroke="#c0c0c0" stroke-width=".8"/>
<circle cx="260.5" cy="316.5" r="4" stroke-width="1.5"/>
<path d="M263.5 319.5 L267.5 323.5" stroke-width="2"/>
</g>
<!-- group dots -->
<g fill="#bdbdbd">
<circle cx="269" cy="109.5" r="1"/><circle cx="249.5" cy="143" r="1"/><circle cx="269.5" cy="143" r="1"/>
<circle cx="249.5" cy="159" r="1"/><circle cx="269.5" cy="159" r="1"/><circle cx="249.5" cy="176" r="1"/><circle cx="269.5" cy="176" r="1"/>
<circle cx="249.5" cy="192" r="1"/><circle cx="269.5" cy="192" r="1"/><circle cx="249.5" cy="209" r="1"/><circle cx="269.5" cy="209" r="1"/>
<circle cx="249.5" cy="225" r="1"/><circle cx="269.5" cy="225" r="1"/><circle cx="249.5" cy="242" r="1"/><circle cx="269.5" cy="242" r="1"/>
<circle cx="249.5" cy="275" r="1"/><circle cx="249.5" cy="292" r="1"/><circle cx="269.5" cy="292" r="1"/><circle cx="269.5" cy="308" r="1"/><circle cx="249.5" cy="325" r="1"/>
</g>
<!-- fill / stroke -->
<rect x="230.5" y="332" width="24.5" height="23.5" fill="#f4f4f4"/>
<path d="M230.5 355.5 L255 332" stroke="#d42a3a" stroke-width="1.6"/>
<rect x="243.5" y="345" width="23.5" height="23" fill="#4a4a4a" stroke="#d0d0d0" stroke-width="1.2"/>
<rect x="248.5" y="350.3" width="13.5" height="13.5" fill="#4a4a4a" stroke="#e0e0e0" stroke-width="1.6"/>
<path d="M263 339 Q268 336 268 342 M266 336.5 L263 339 L265.5 341" stroke="#c8c8c8" stroke-width="1.1" fill="none"/>
<circle cx="235" cy="363.5" r="3" fill="#d0d0d0"/><circle cx="236.5" cy="365" r="2" fill="#333"/>
<!-- draw modes -->
<rect x="231" y="375" width="11" height="11" fill="#2a2a2a"/>
<rect x="233.5" y="377.5" width="6" height="6" fill="none" stroke="#c8c8c8" stroke-width="1.2"/>
<defs><linearGradient id="tg2" x1="0" x2="1"><stop offset="0" stop-color="#e8e8e8"/><stop offset="1" stop-color="#333"/></linearGradient></defs>
<rect x="247" y="375.5" width="9" height="10" fill="url(#tg2)"/>
<rect x="260" y="375.5" width="10" height="10" fill="#f0f0f0"/>
<path d="M260 385.5 L270 375.5" stroke="#d42a3a" stroke-width="1.5"/>
<rect x="231" y="391" width="12" height="12" fill="#2a2a2a"/>
<circle cx="236" cy="396" r="3" fill="#c8c8c8"/><circle cx="238.5" cy="398.5" r="3" fill="#a8a8a8"/>
<circle cx="250" cy="396" r="2.8" fill="none" stroke="#bbb" stroke-width="1.1"/><circle cx="252.5" cy="398.5" r="2.8" fill="#bbb"/>
<!-- screen mode -->
<rect x="242" y="411" width="9" height="8" fill="none" stroke="#c8c8c8" stroke-width="1.2"/>
<rect x="248" y="407.5" width="11" height="8" fill="#5a5a5a" stroke="#c8c8c8" stroke-width="1.2"/>
<circle cx="247" cy="437.5" r="1.1" fill="#d0d0d0"/><circle cx="251" cy="437.5" r="1.1" fill="#d0d0d0"/><circle cx="255" cy="437.5" r="1.1" fill="#d0d0d0"/>
</svg>
<!-- artboard -->
<div class="a" style="left:329.5px;top:98px;width:407.5px;height:508px;background:#383838"></div>
<svg class="a" style="left:331px;top:99px" width="404.5" height="505.5" viewBox="331 99 404.5 505.5">
<rect x="331" y="99" width="405" height="507" fill="#fff"/>
<g fill="none" stroke="#505050" stroke-width="3" stroke-linecap="round" stroke-linejoin="round">
<!-- table line -->
<path d="M331 524.5 H409 M650 524.5 H735.5"/>
<!-- pencil 1 leaning -->
<path d="M417.7 344 L383.5 255.3 L395.6 229.4 L423.3 242.3 L424.2 245 L444.5 344"/>
<path d="M389 243 Q393 251 399 249.5 Q404 248 405.5 241 L408.5 235.5"/>
<path d="M386.3 259 Q391 256 395 261 Q399 265 403 262 Q408 262 411 266 L415 272 Q416 258 422.4 249.7"/>
<path d="M401 272 L412.2 301.5 M418.7 279.3 L440.8 340"/>
<!-- pencil 2 tall eraser -->
<path d="M419.8 164 L419 150 Q419 144 426 143 L452 139.6 Q460 139 460.5 147 L462 159.6"/>
<path d="M414.6 165.5 L468.6 158.8 L476.7 221.7 L424.2 228.4 Z" fill="#fff"/>
<path d="M417.6 177.3 L470 171.2 M421.5 215 L474.5 208.5"/>
<path d="M454.5 176 L459 212 M459.5 175.4 L464 211.5"/>
<path d="M431.6 227.5 L449.2 344 M453.8 227 L471.3 344 M452 308 L457 342 M470.5 223.5 L487.7 344"/>
<!-- pencil 3 mid -->
<path d="M488.9 344 L482 215.2 L506.5 188.8 L534.1 214 L521.6 344"/>
<path d="M493.3 203.3 Q498 214 504 213 Q510 208 514 210 Q520 212 526.7 206"/>
<path d="M486.3 224 Q491 219 496 224 Q501 228 504 226 Q509 228 510 236 L512.8 248 Q515 232 531.6 220"/>
<path d="M496.4 241.6 L498.9 280.6 M514.8 256.7 L517.8 344"/>
<!-- pencil 4 tall -->
<path d="M525 344 L547.7 157.6 L580.3 131.5 L608 167.3 L586 300"/>
<path d="M562.7 145.7 Q567 160 578 159 Q588 153 600.8 158"/>
<path d="M549 172 Q554 166 559 172 Q564 176 567 174 Q572 177 573 188 L575.4 200 Q580 184 606 177"/>
<path d="M558.4 191.8 L552.6 234 M576 213 L557 344"/>
<!-- pencil 5 eraser right -->
<path d="M602 236 L606 227 Q609 221.7 616 223 L634 230 Q640 233 639.4 240 L637.8 253"/>
<path d="M591.3 237.1 L642.3 256.3 L618.3 315 L568.3 294.8 Z" fill="#fff"/>
<path d="M589.4 249.6 L637.5 266 M574 285.2 L621 302.5"/>
<path d="M612.5 259.2 L601 292.9 M616.3 261 L605.8 293.8"/>
<path d="M575 299.6 L558.7 344 M596 309 L583.7 344 M612.5 313 L601 344"/>
<!-- mug -->
<path d="M409 344 H607.4 V359.5 H617 A80 87.75 0 0 1 617 535 H607 V553 Q607 568 593 568 H423 Q409 568 409 553 Z" fill="#fff"/>
<path d="M607.4 405 Q607.4 397 616 397 A50 49.75 0 0 1 616 496.5 Q607.4 496.5 607.4 488 Z"/>
<!-- flame -->
<path d="M517.4 508.7 Q511 514 510.7 530 L510.7 541 Q509.5 545 508 538 L507.8 522.6 Q497 532 498.2 543.3 Q499 557.7 511 557.7 Q525 556 526.5 541.3 Q526 533 519 524 Q514 516 517.4 508.7 Z" stroke-width="2.4"/>
<!-- signature -->
<g stroke-width="1.3">
<path d="M662.3 557 L695.1 537.4 M662.3 557 L632.5 563.2 M662.3 557 Q650 565 637.4 571.1 M662.3 557 Q652 570 634.8 580.5"/>
<path d="M667 543 L669.5 563 M673.7 540 L675.5 560.7 M680.3 537 L681.5 558 M688 532 L689 555 M692 546 L700 542"/>
<circle cx="704.5" cy="543" r="1.3"/>
</g>
</g>
<!-- ART FUEL -->
<g font-family="Liberation Sans" font-weight="bold" font-size="59" stroke-linejoin="miter" stroke-miterlimit="2.5">
<text x="449" y="426" stroke="#505050" stroke-width="7.4" fill="#505050" letter-spacing="1">ART</text>
<text x="449" y="426" fill="#fff" stroke="#fff" stroke-width="2.2" letter-spacing="1">ART</text>
<text x="437" y="498" stroke="#505050" stroke-width="7.4" fill="#505050" letter-spacing="-0.6">FUEL</text>
<text x="437" y="498" fill="#fff" stroke="#fff" stroke-width="2.2" letter-spacing="-0.6">FUEL</text>
</g>
</svg>
</body></html>
